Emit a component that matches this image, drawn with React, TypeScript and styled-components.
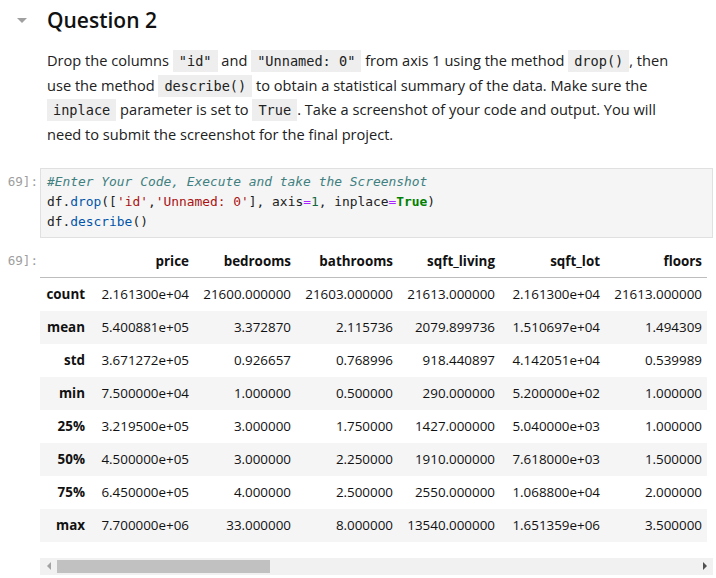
import React from 'react';
import styled, { createGlobalStyle } from 'styled-components';

const GlobalStyle = createGlobalStyle`
  html, body {
    margin: 0;
    padding: 0;
    background: #ffffff;
  }
  body {
    font-family: "Open Sans", "Noto Sans", sans-serif;
    color: #212121;
  }
`;

const Notebook = styled.div`
  width: 716px;
  padding-right: 3px;
  box-sizing: border-box;
  overflow: hidden;
`;

const Cell = styled.div<{ $top?: number }>`
  display: grid;
  grid-template-columns: 40px 1fr;
  margin-top: ${(p) => p.$top ?? 0}px;
`;

const CaretArea = styled.div`
  padding: 18px 0 0 17px;
`;

const Caret = styled.div`
  width: 0;
  height: 0;
  border-left: 5px solid transparent;
  border-right: 5px solid transparent;
  border-top: 5px solid #a0a0a0;
`;

const Prompt = styled.div<{ $top: number }>`
  font-family: "DejaVu Sans Mono", "Liberation Mono", monospace;
  font-size: 12.6px;
  line-height: 20px;
  color: #9e9e9e;
  text-align: right;
  padding: ${(p) => p.$top}px 2px 0 0;
  white-space: nowrap;
  overflow: hidden;
`;

const Markdown = styled.div`
  padding-left: 7px;
`;

const Heading = styled.h2`
  margin: 7px 0 0 0;
  font-size: 21px;
  line-height: 26px;
  font-weight: 600;
  color: #111111;
`;

const Para = styled.p`
  margin: 15px 0 0 0;
  font-size: 14.6px;
  line-height: 24.7px;
  white-space: nowrap;
`;

const InlineCode = styled.code`
  font-family: "DejaVu Sans Mono", "Liberation Mono", monospace;
  font-size: 13.6px;
  line-height: 1;
  background: #eeeeee;
  padding: 3px 6px;
  color: #212121;
`;

const CodeBox = styled.pre`
  margin: 0;
  border: 1px solid #e0e0e0;
  background: #f5f5f5;
  padding: 3px 6px 5px 6px;
  font-family: "DejaVu Sans Mono", "Liberation Mono", monospace;
  font-size: 12.9px;
  line-height: 20px;
  color: #212121;
`;

const Tok = styled.span<{ $c: string; $i?: boolean; $b?: boolean }>`
  color: ${(p) => p.$c};
  font-style: ${(p) => (p.$i ? 'italic' : 'normal')};
  font-weight: ${(p) => (p.$b ? 600 : 400)};
`;

const OutputArea = styled.div`
  min-width: 0;
`;

const TableWrap = styled.div`
  width: 673px;
  overflow: hidden;
`;

const Table = styled.table<{ $w: number }>`
  width: ${(p) => p.$w}px;
  border-collapse: collapse;
  table-layout: fixed;
  font-size: 13.4px;
  color: #111111;
`;

const Col = styled.col<{ $w: number }>`
  width: ${(p) => p.$w}px;
`;

const HeadCell = styled.th`
  height: 32px;
  padding: 0 5px;
  text-align: right;
  font-weight: 700;
  white-space: nowrap;
  border-bottom: 1px solid #bdbdbd;
`;

const Row = styled.tr<{ $striped: boolean }>`
  background: ${(p) => (p.$striped ? '#f5f5f5' : '#ffffff')};
`;

const IndexCell = styled.th`
  height: 33px;
  padding: 0 5px;
  text-align: right;
  font-weight: 700;
  white-space: nowrap;
`;

const DataCell = styled.td`
  height: 33px;
  padding: 0 5px;
  text-align: right;
  white-space: nowrap;
`;

const ScrollTrack = styled.div`
  margin-top: 16px;
  width: 673px;
  height: 17px;
  background: #f1f1f1;
  display: flex;
  align-items: center;
`;

const ArrowButton = styled.div`
  width: 17px;
  height: 17px;
  display: flex;
  align-items: center;
  justify-content: center;
  flex-shrink: 0;
`;

const ArrowLeft = styled.div`
  width: 0;
  height: 0;
  border-top: 4px solid transparent;
  border-bottom: 4px solid transparent;
  border-right: 4px solid #a3a3a3;
`;

const ArrowRight = styled.div`
  width: 0;
  height: 0;
  border-top: 4px solid transparent;
  border-bottom: 4px solid transparent;
  border-left: 4px solid #505050;
`;

const ThumbLane = styled.div`
  flex: 1;
  height: 13px;
`;

const Thumb = styled.div<{ $w: number }>`
  width: ${(p) => p.$w}px;
  height: 13px;
  background: #c1c1c1;
`;

const columns = ['price', 'bedrooms', 'bathrooms', 'sqft_living', 'sqft_lot', 'floors'];
const widths = [50, 104, 102, 102, 102, 105, 102];
const tableWidth = widths.reduce((a, b) => a + b, 0);

const rows: [string, string[]][] = [
  ['count', ['2.161300e+04', '21600.000000', '21603.000000', '21613.000000', '2.161300e+04', '21613.000000']],
  ['mean', ['5.400881e+05', '3.372870', '2.115736', '2079.899736', '1.510697e+04', '1.494309']],
  ['std', ['3.671272e+05', '0.926657', '0.768996', '918.440897', '4.142051e+04', '0.539989']],
  ['min', ['7.500000e+04', '1.000000', '0.500000', '290.000000', '5.200000e+02', '1.000000']],
  ['25%', ['3.219500e+05', '3.000000', '1.750000', '1427.000000', '5.040000e+03', '1.000000']],
  ['50%', ['4.500000e+05', '3.000000', '2.250000', '1910.000000', '7.618000e+03', '1.500000']],
  ['75%', ['6.450000e+05', '4.000000', '2.500000', '2550.000000', '1.068800e+04', '2.000000']],
  ['max', ['7.700000e+06', '33.000000', '8.000000', '13540.000000', '1.651359e+06', '3.500000']],
];

const DescribeTable: React.FC = () => (
  <TableWrap>
    <Table $w={tableWidth}>
      <colgroup>
        {widths.map((w, i) => (
          <Col key={i} $w={w} />
        ))}
      </colgroup>
      <thead>
        <tr>
          <HeadCell />
          {columns.map((c) => (
            <HeadCell key={c}>{c}</HeadCell>
          ))}
        </tr>
      </thead>
      <tbody>
        {rows.map(([label, values], i) => (
          <Row key={label} $striped={i % 2 === 1}>
            <IndexCell>{label}</IndexCell>
            {values.map((v, j) => (
              <DataCell key={j}>{v}</DataCell>
            ))}
          </Row>
        ))}
      </tbody>
    </Table>
  </TableWrap>
);

const App: React.FC = () => {
  return (
    <Notebook>
      <GlobalStyle />
      <Cell>
        <CaretArea>
          <Caret />
        </CaretArea>
        <Markdown>
          <Heading>Question 2</Heading>
          <Para>
            Drop the columns <InlineCode>"id"</InlineCode> and <InlineCode>"Unnamed: 0"</InlineCode> from axis 1 using the
            method <InlineCode>drop()</InlineCode>, then
            <br />
            use the method <InlineCode>describe()</InlineCode> to obtain a statistical summary of the data. Make sure the
            <br />
            <InlineCode>inplace</InlineCode> parameter is set to <InlineCode>True</InlineCode>. Take a screenshot of your
            code and output. You will
            <br />
            need to submit the screenshot for the final project.
          </Para>
        </Markdown>
      </Cell>

      <Cell $top={21}>
        <Prompt $top={4}>69]:</Prompt>
        <CodeBox>
          <Tok $c="#408080" $i>#Enter Your Code, Execute and take the Screenshot</Tok>
          {'\n'}df.<Tok $c="#0055aa">drop</Tok>([<Tok $c="#aa1111">'id'</Tok>,<Tok $c="#aa1111">'Unnamed: 0'</Tok>], axis
          <Tok $c="#aa22ff">=</Tok>
          <Tok $c="#116644">1</Tok>, inplace<Tok $c="#aa22ff">=</Tok>
          <Tok $c="#008000" $b>True</Tok>)
          {'\n'}df.<Tok $c="#0055aa">describe</Tok>()
        </CodeBox>
      </Cell>

      <Cell $top={7}>
        <Prompt $top={6}>69]:</Prompt>
        <OutputArea>
          <DescribeTable />
          <ScrollTrack>
            <ArrowButton>
              <ArrowLeft />
            </ArrowButton>
            <ThumbLane>
              <Thumb $w={213} />
            </ThumbLane>
            <ArrowButton>
              <ArrowRight />
            </ArrowButton>
          </ScrollTrack>
        </OutputArea>
      </Cell>
    </Notebook>
  );
};

export default App;
